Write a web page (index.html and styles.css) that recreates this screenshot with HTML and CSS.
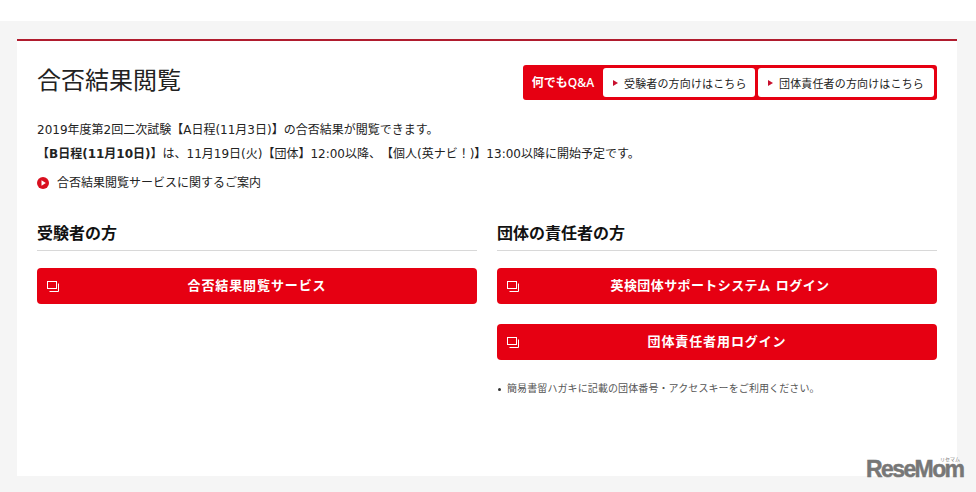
FILE: index.html
```html
<!DOCTYPE html>
<html lang="ja">
<head>
<meta charset="utf-8">
<title>合否結果閲覧</title>
<link rel="stylesheet" href="styles.css">
</head>
<body>
<main class="page">
  <section class="card">
    <header class="head">
      <h1 class="title">合否結果閲覧</h1>
      <div class="qa">
        <span class="qa-label">何でもQ&amp;A</span>
        <a class="qa-link qa-link-short"><i class="tri"></i>受験者の方向けはこちら</a>
        <a class="qa-link qa-link-long"><i class="tri"></i>団体責任者の方向けはこちら</a>
      </div>
    </header>
    <p class="line">2019年度第2回二次試験【A日程(11月3日)】の合否結果が閲覧できます。</p>
    <p class="line line-second"><b class="strong">【B日程(11月10日)】</b>は、11月19日(火)【団体】12:00以降、【個人(英ナビ！)】13:00以降に開始予定です。</p>
    <a class="guide">
      <svg class="guide-icon" width="12" height="12" viewBox="0 0 12 12"><circle cx="6" cy="6" r="6" fill="#d9101f"/><path d="M4.5 3.3 8.8 6 4.5 8.7z" fill="#fff"/></svg>
      合否結果閲覧サービスに関するご案内
    </a>
    <div class="cols">
      <div class="col">
        <h2 class="sub">受験者の方</h2>
        <a class="btn">
          <svg class="btn-icon" width="12" height="11" viewBox="0 0 12 11" fill="none" stroke="#fff"><rect x="0.5" y="0.5" width="9" height="7"/><path d="M11.5 2.5v8h-9"/></svg>
          合否結果閲覧サービス
        </a>
      </div>
      <div class="col">
        <h2 class="sub">団体の責任者の方</h2>
        <a class="btn btn-tight">
          <svg class="btn-icon" width="12" height="11" viewBox="0 0 12 11" fill="none" stroke="#fff"><rect x="0.5" y="0.5" width="9" height="7"/><path d="M11.5 2.5v8h-9"/></svg>
          英検団体サポートシステム ログイン
        </a>
        <a class="btn btn-next">
          <svg class="btn-icon" width="12" height="11" viewBox="0 0 12 11" fill="none" stroke="#fff"><rect x="0.5" y="0.5" width="9" height="7"/><path d="M11.5 2.5v8h-9"/></svg>
          団体責任者用ログイン
        </a>
        <ul class="notes"><li class="note">簡易書留ハガキに記載の団体番号・アクセスキーをご利用ください。</li></ul>
      </div>
    </div>
  </section>
  <div class="logo"><span class="logo-kana">リセマム</span><span class="logo-text">ReseMom</span></div>
</main>
</body>
</html>
```
FILE: styles.css
```css
* { box-sizing: border-box; }
html, body { margin: 0; height: 100%; }
body {
  background: #fff;
  font-family: "DejaVu Sans", "Noto Sans CJK JP", sans-serif;
  color: #222;
  overflow: hidden;
  text-spacing-trim: space-all;
}
.page {
  position: relative;
  margin-top: 21px;
  height: 471px;
  background: #f5f5f5;
  padding: 18px 19px 16px 17px;
}
.card {
  height: 437px;
  background: #fff;
  border-top: 2px solid #b01c2e;
  padding: 24px 20px 0;
}
.head {
  display: flex;
  justify-content: space-between;
  align-items: flex-start;
  height: 56px;
}
.title {
  margin: 0;
  font-size: 24px;
  line-height: 32px;
  font-weight: 400;
  color: #222;
}
.qa {
  display: flex;
  align-items: stretch;
  height: 35px;
  background: #e60012;
  border-radius: 3px;
  padding: 3px;
  gap: 3px;
}
.qa-label {
  color: #fff;
  font-family: "Open Sans", "Noto Sans CJK JP", sans-serif;
  font-size: 12px;
  font-weight: 600;
  line-height: 29px;
  width: 74px;
  text-align: center;
  white-space: nowrap;
}
.qa-link {
  display: flex;
  align-items: center;
  background: #fff;
  border-radius: 3px;
  font-size: 11px;
  letter-spacing: 0.15px;
  color: #222;
  padding-left: 10px;
  white-space: nowrap;
}
.qa-link-short { width: 152px; }
.qa-link-long { width: 176px; }
.tri {
  width: 0;
  height: 0;
  margin-right: 6px;
  border-left: 5px solid #c8102e;
  border-top: 3px solid transparent;
  border-bottom: 3px solid transparent;
}
.line {
  margin: 0;
  font-size: 12px;
  line-height: 18px;
  color: #222;
  white-space: nowrap;
}
.line-second { margin-top: 6px; }
.strong { font-weight: 700; }
.guide {
  display: flex;
  align-items: center;
  gap: 8px;
  margin-top: 11px;
  font-size: 12px;
  line-height: 18px;
}
.cols {
  display: flex;
  gap: 20px;
  margin-top: 28px;
}
.col { width: 440px; }
.sub {
  margin: 0;
  height: 31px;
  font-size: 16px;
  line-height: 28px;
  font-weight: 700;
  color: #111;
  border-bottom: 1px solid #d8d8d8;
}
.btn {
  position: relative;
  display: flex;
  align-items: center;
  justify-content: center;
  height: 36px;
  margin-top: 17px;
  padding-bottom: 3px;
  background: #e60012;
  border-radius: 4px;
  color: #fff;
  font-size: 13px;
  font-weight: 700;
  letter-spacing: 0.9px;
}
.btn-tight {
  letter-spacing: 0.4px;
  padding-left: 6px;
}
.btn-next { margin-top: 20px; }
.btn-icon {
  position: absolute;
  left: 10px;
  top: 13px;
}
.notes {
  list-style: none;
  margin: 22px 0 0;
  padding: 0 0 0 10px;
  font-size: 10px;
  letter-spacing: 0.1px;
  line-height: 14px;
  color: #555;
}
.note { position: relative; white-space: nowrap; }
.note::before {
  content: "";
  position: absolute;
  left: -9px;
  top: 6px;
  width: 3px;
  height: 3px;
  border-radius: 50%;
  background: #333;
}
.logo {
  position: absolute;
  right: 13px;
  bottom: 13px;
  width: 97px;
  color: #777;
  text-align: right;
}
.logo-text {
  display: block;
  font-family: "Liberation Sans", sans-serif;
  font-weight: 700;
  font-size: 23px;
  line-height: 20px;
  letter-spacing: -1.6px;
  white-space: nowrap;
  -webkit-text-stroke: 0.5px #777;
}
.logo-kana {
  display: block;
  font-size: 5px;
  line-height: 5px;
  margin-bottom: -3px;
  padding-right: 3px;
}
```
